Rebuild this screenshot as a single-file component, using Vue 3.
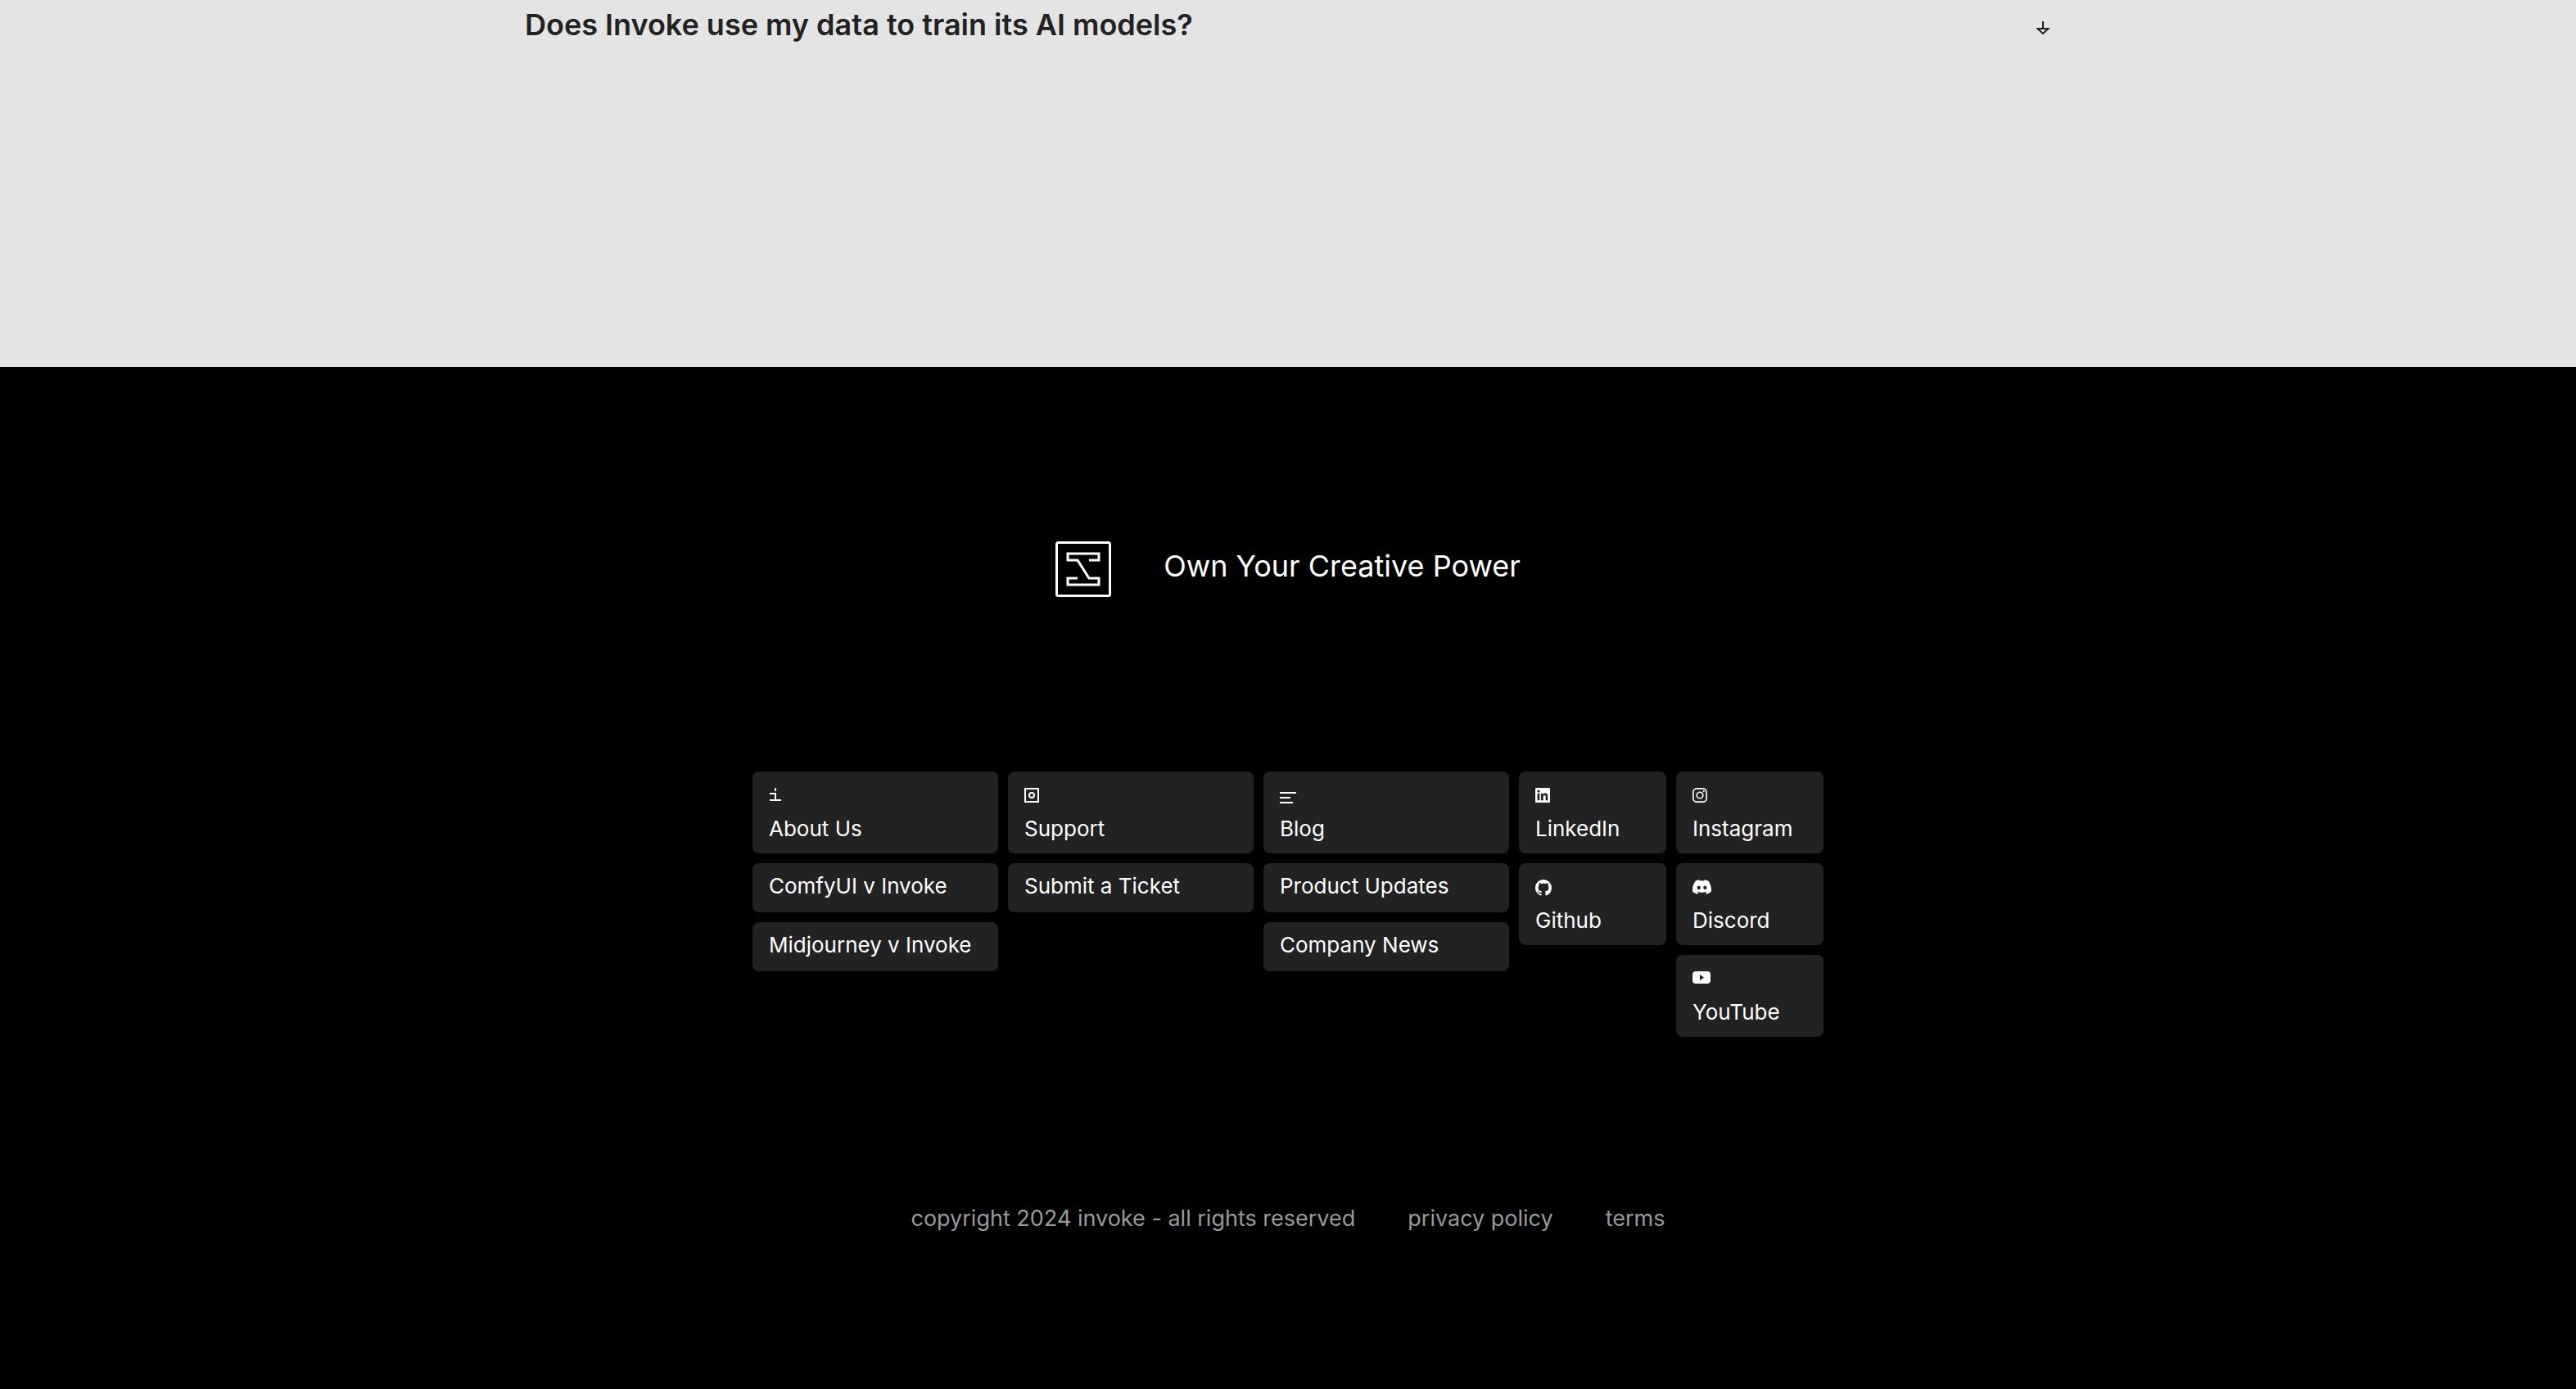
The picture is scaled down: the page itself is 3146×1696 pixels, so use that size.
<script setup>
const columns = [
  { wide: true, links: [
    { label: 'About Us', icon: 'info' },
    { label: 'ComfyUI v Invoke' },
    { label: 'Midjourney v Invoke' },
  ] },
  { wide: true, links: [
    { label: 'Support', icon: 'support' },
    { label: 'Submit a Ticket' },
  ] },
  { wide: true, links: [
    { label: 'Blog', icon: 'blog' },
    { label: 'Product Updates' },
    { label: 'Company News' },
  ] },
  { wide: false, links: [
    { label: 'LinkedIn', icon: 'linkedin' },
    { label: 'Github', icon: 'github' },
  ] },
  { wide: false, links: [
    { label: 'Instagram', icon: 'instagram' },
    { label: 'Discord', icon: 'discord' },
    { label: 'YouTube', icon: 'youtube' },
  ] },
]

const icons = {
  info: { w: 18, h: 18, box: '0 0 18 18', d: 'M7 0h2v4H7zM1 6h8v8h6v2H1v-2h6V8H1z' },
  support: { w: 18, h: 18, box: '0 0 18 18', d: 'M0 0h18v18H0zM2 2v14h14V2zM9 5a4 4 0 1 1 0 8a4 4 0 0 1 0-8zM9 7a2 2 0 1 0 0 4a2 2 0 0 0 0-4z' },
  blog: { w: 20, h: 20, box: '0 0 20 20', d: 'M0 5h20v2H0zM0 11h13v2H0zM0 17h16v2H0z' },
  linkedin: { w: 18, h: 18, box: '0 0 24 24', d: 'M20.447 20.452h-3.554v-5.569c0-1.328-.027-3.037-1.852-3.037-1.853 0-2.136 1.445-2.136 2.939v5.667H9.351V9h3.414v1.561h.046c.477-.9 1.637-1.85 3.37-1.85 3.601 0 4.267 2.37 4.267 5.455v6.286zM5.337 7.433a2.062 2.062 0 1 1 0-4.125 2.062 2.062 0 0 1 0 4.125zM7.119 20.452H3.555V9h3.564v11.452zM22.225 0H1.771C.792 0 0 .774 0 1.729v20.542C0 23.227.792 24 1.771 24h20.451C23.2 24 24 23.227 24 22.271V1.729C24 .774 23.2 0 22.222 0z' },
  github: { w: 20, h: 20, box: '0 0 16 16', d: 'M8 0C3.58 0 0 3.58 0 8c0 3.54 2.29 6.53 5.47 7.59.4.07.55-.17.55-.38 0-.19-.01-.82-.01-1.49-2.01.37-2.53-.49-2.69-.94-.09-.23-.48-.94-.82-1.13-.28-.15-.68-.52-.01-.53.63-.01 1.08.58 1.23.82.72 1.21 1.87.87 2.33.66.07-.52.28-.87.51-1.07-1.78-.2-3.64-.89-3.64-3.95 0-.87.31-1.59.82-2.15-.08-.2-.36-1.02.08-2.12 0 0 .67-.21 2.2.82.64-.18 1.32-.27 2-.27s1.36.09 2 .27c1.53-1.04 2.2-.82 2.2-.82.44 1.1.16 1.92.08 2.12.51.56.82 1.27.82 2.15 0 3.07-1.87 3.75-3.65 3.95.29.25.54.73.54 1.48 0 1.07-.01 1.93-.01 2.2 0 .21.15.46.55.38A8.01 8.01 0 0 0 16 8c0-4.42-3.58-8-8-8z' },
  instagram: { w: 18, h: 18, box: '0 0 24 24', d: 'M7 0h10a7 7 0 0 1 7 7v10a7 7 0 0 1-7 7H7a7 7 0 0 1-7-7V7a7 7 0 0 1 7-7zM7 2.2a4.8 4.8 0 0 0-4.8 4.8v10a4.8 4.8 0 0 0 4.8 4.8h10a4.8 4.8 0 0 0 4.8-4.8V7a4.8 4.8 0 0 0-4.8-4.8zM12 5.838a6.162 6.162 0 1 1 0 12.324a6.162 6.162 0 0 1 0-12.324zM12 8a4 4 0 1 0 0 8a4 4 0 0 0 0-8zM18.4 4.15a1.44 1.44 0 1 1 0 2.88a1.44 1.44 0 0 1 0-2.88z' },
  discord: { w: 23, h: 18, box: '0 2.8 24 18.4', d: 'M20.317 4.37a19.791 19.791 0 0 0-4.885-1.515.074.074 0 0 0-.079.037c-.21.375-.444.864-.608 1.25a18.27 18.27 0 0 0-5.487 0 12.64 12.64 0 0 0-.617-1.25.077.077 0 0 0-.079-.037A19.736 19.736 0 0 0 3.677 4.37a.07.07 0 0 0-.032.027C.533 9.046-.32 13.58.099 18.057a.082.082 0 0 0 .031.057 19.9 19.9 0 0 0 5.993 3.03.078.078 0 0 0 .084-.028c.462-.63.874-1.295 1.226-1.994a.076.076 0 0 0-.041-.106 13.107 13.107 0 0 1-1.872-.892.077.077 0 0 1-.008-.128c.126-.094.252-.192.372-.291a.074.074 0 0 1 .077-.01c3.928 1.793 8.18 1.793 12.062 0a.074.074 0 0 1 .078.009c.12.099.246.198.373.292a.077.077 0 0 1-.006.127 12.299 12.299 0 0 1-1.873.892.077.077 0 0 0-.041.107c.36.698.772 1.362 1.225 1.993a.076.076 0 0 0 .084.028 19.839 19.839 0 0 0 6.002-3.03.077.077 0 0 0 .032-.054c.5-5.177-.838-9.674-3.549-13.66a.061.061 0 0 0-.031-.03zM8.02 15.331c-1.183 0-2.157-1.086-2.157-2.419s.956-2.419 2.157-2.419c1.211 0 2.176 1.095 2.157 2.419 0 1.333-.956 2.419-2.157 2.419zm7.975 0c-1.183 0-2.157-1.086-2.157-2.419s.955-2.419 2.157-2.419c1.211 0 2.176 1.095 2.157 2.419 0 1.333-.946 2.419-2.157 2.419z' },
  youtube: { w: 22, h: 15, box: '0 0 22 15', d: 'M4 0h14a4 4 0 0 1 4 4v7a4 4 0 0 1-4 4H4a4 4 0 0 1-4-4V4a4 4 0 0 1 4-4zM9 4v7l5-3.5z' },
}
</script>

<template>
  <main class="page">
    <section class="faq">
      <button class="question" type="button">
        <span>Does Invoke use my data to train its AI models?</span>
        <svg class="arrow" width="16" height="16" viewBox="0 0 16 16" fill="none" stroke="currentColor" stroke-width="2" aria-hidden="true">
          <path d="M8 0V9M1.5 9H14.5L8 15Z" />
        </svg>
      </button>
    </section>

    <footer class="footer">
      <div class="brand">
        <svg class="logo" width="68" height="68" viewBox="0 0 68 68" fill="none" stroke="currentColor" aria-hidden="true">
          <rect x="1.5" y="1.5" width="65" height="65" rx="2" stroke-width="3" />
          <path d="M41 23H53V15H15V23H27L41 45H53V53H15V45H27" stroke-width="3" />
        </svg>
        <span class="tagline">Own Your Creative Power</span>
      </div>

      <nav class="columns" aria-label="Footer">
        <ul v-for="(column, i) in columns" :key="i" class="column" :class="{ wide: column.wide }">
          <li v-for="link in column.links" :key="link.label">
            <a class="card" :class="{ tall: link.icon }" href="#">
              <span v-if="link.icon" class="icon">
                <svg :width="icons[link.icon].w" :height="icons[link.icon].h" :viewBox="icons[link.icon].box" aria-hidden="true">
                  <path :d="icons[link.icon].d" fill="currentColor" fill-rule="evenodd" />
                </svg>
              </span>
              <span class="label">{{ link.label }}</span>
            </a>
          </li>
        </ul>
      </nav>

      <div class="legal">
        <span>copyright 2024 invoke - all rights reserved</span>
        <a href="#">privacy policy</a>
        <a href="#">terms</a>
      </div>
    </footer>
  </main>
</template>

<style>
body {
  margin: 0;
  background: #000;
}
</style>

<style scoped>
.page {
  display: flex;
  flex-direction: column;
  font-family: Inter, "Liberation Sans", sans-serif;
}

.faq {
  display: flex;
  justify-content: center;
  padding: 6px 40px 394px;
  background: #e4e4e4;
}

.question {
  display: flex;
  align-items: center;
  justify-content: space-between;
  width: 100%;
  max-width: 1864px;
  padding: 0;
  border: 0;
  background: none;
  color: #222;
  font: 600 36px/48px Inter, "Liberation Sans", sans-serif;
  text-align: left;
}

.arrow {
  margin: 8px 2px 0;
}

.footer {
  display: flex;
  flex: 1;
  flex-direction: column;
  align-items: center;
  padding: 213px 40px 180px;
  background: #000;
  color: #fff;
}

.brand {
  display: flex;
  align-items: center;
  gap: 64px;
}

.tagline {
  padding-bottom: 8px;
  font-size: 36px;
  line-height: 48px;
}

.columns {
  display: flex;
  gap: 12px;
  margin-top: 213px;
}

.column {
  display: flex;
  flex-direction: column;
  gap: 12px;
  width: 180px;
  margin: 0;
  padding: 0;
  list-style: none;
}

.column.wide {
  width: 300px;
}

.card {
  display: flex;
  flex-direction: column;
  justify-content: space-between;
  box-sizing: border-box;
  height: 60px;
  padding: 12px 20px;
  border-radius: 8px;
  background: #222;
  color: #fff;
  text-decoration: none;
}

.card.tall {
  height: 100px;
  padding: 20px 20px 14px;
}

.icon,
.icon svg {
  display: block;
}

.label {
  font-size: 26px;
  line-height: 32px;
  white-space: nowrap;
}

.legal {
  display: flex;
  gap: 64px;
  margin-top: 206px;
  color: #999;
  font-size: 27px;
  line-height: 32px;
}

.legal a {
  color: inherit;
  text-decoration: none;
}
</style>
